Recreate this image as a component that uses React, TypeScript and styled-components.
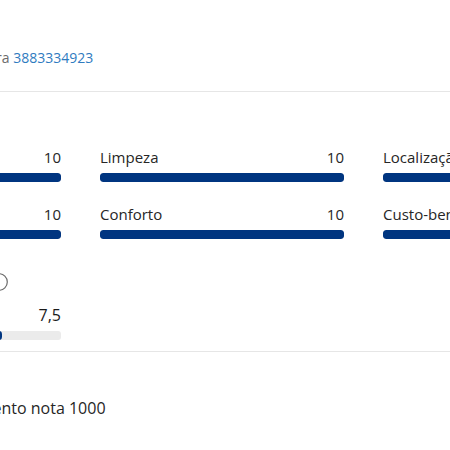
import React from "react";
import styled, { createGlobalStyle } from "styled-components";

const GlobalStyle = createGlobalStyle`
  html, body {
    margin: 0;
    padding: 0;
    background: #fff;
    overflow: hidden;
  }
  body {
    font-family: "Open Sans", "Noto Sans", sans-serif;
    color: #262626;
  }
`;

type Score = { label: string; value: string; percent: number };

const scores: Score[] = [
  { label: "Funcionários", value: "10", percent: 100 },
  { label: "Limpeza", value: "10", percent: 100 },
  { label: "Localização", value: "10", percent: 100 },
  { label: "Comodidades", value: "10", percent: 100 },
  { label: "Conforto", value: "10", percent: 100 },
  { label: "Custo-benefício", value: "10", percent: 100 },
];

function InfoIcon() {
  return (
    <svg width="18" height="18" viewBox="0 0 18 18" fill="none">
      <circle cx="9" cy="9" r="8.3" stroke="#6b6b6b" strokeWidth="1.2" />
      <path d="M9 8v5" stroke="#6b6b6b" strokeWidth="1.3" />
      <circle cx="9" cy="5.4" r="0.9" fill="#6b6b6b" />
    </svg>
  );
}

export default function App() {
  return (
    <>
      <GlobalStyle />
      <Page>
        <Header>
          <Muted>Avaliações de hóspedes para </Muted>
          <Link>3883334923</Link>
        </Header>
        <Divider />
        <ScoreGrid>
          {scores.map((s) => (
            <ScoreItem key={s.label}>
              <ScoreHead>
                <span>{s.label}</span>
                <span>{s.value}</span>
              </ScoreHead>
              <Track>
                <Fill style={{ width: `${s.percent}%` }} />
              </Track>
            </ScoreItem>
          ))}
        </ScoreGrid>
        <SubScore>
          <SubLabel>
            <span>Wi-Fi gratuito</span>
            <InfoIcon />
          </SubLabel>
          <SubValue>7,5</SubValue>
          <LightTrack>
            <Fill style={{ width: "76%" }} />
          </LightTrack>
        </SubScore>
        <Divider />
        <Footer>Hóspedes que deram ao estabelecimento nota 1000</Footer>
      </Page>
    </>
  );
}

const Page = styled.div`
  margin-left: -183px;
  width: 900px;
  padding-top: 48px;
`;

const Header = styled.div`
  font-size: 14px;
  line-height: 20px;
  margin-left: 4px;
  padding-bottom: 23px;
`;

const Muted = styled.span`
  color: #6b6b6b;
`;

const Link = styled.span`
  color: #2f7bbf;
`;

const Divider = styled.div`
  height: 1px;
  background: #e6e6e6;
  margin-left: -40px;
`;

const ScoreGrid = styled.div`
  display: grid;
  grid-template-columns: repeat(3, 244px);
  column-gap: 39px;
  row-gap: 22px;
  padding-top: 55px;
`;

const ScoreItem = styled.div`
  display: flex;
  flex-direction: column;
  gap: 6px;
`;

const ScoreHead = styled.div`
  display: flex;
  justify-content: space-between;
  font-size: 15px;
  line-height: 20px;
  color: #262626;
`;

const Track = styled.div`
  height: 9px;
  border-radius: 3px;
  background: #ebebeb;
  overflow: hidden;
`;

const Fill = styled.div`
  height: 100%;
  background: #003580;
  border-radius: 3px;
`;

const SubScore = styled.div`
  width: 244px;
  padding-top: 33px;
  padding-bottom: 11px;
  display: flex;
  flex-direction: column;
`;

const SubLabel = styled.div`
  display: flex;
  align-items: center;
  gap: 6px;
  font-size: 15px;
  line-height: 20px;
  margin-left: 74px;
`;

const SubValue = styled.div`
  align-self: flex-end;
  font-size: 16px;
  line-height: 22px;
  color: #1a1a1a;
  margin-top: 12px;
`;

const LightTrack = styled(Track)`
  margin-top: 5px;
  width: 244px;
`;

const Footer = styled.div`
  font-size: 16px;
  line-height: 20px;
  padding-top: 46px;
  color: #262626;
  margin-left: -101px;
`;
